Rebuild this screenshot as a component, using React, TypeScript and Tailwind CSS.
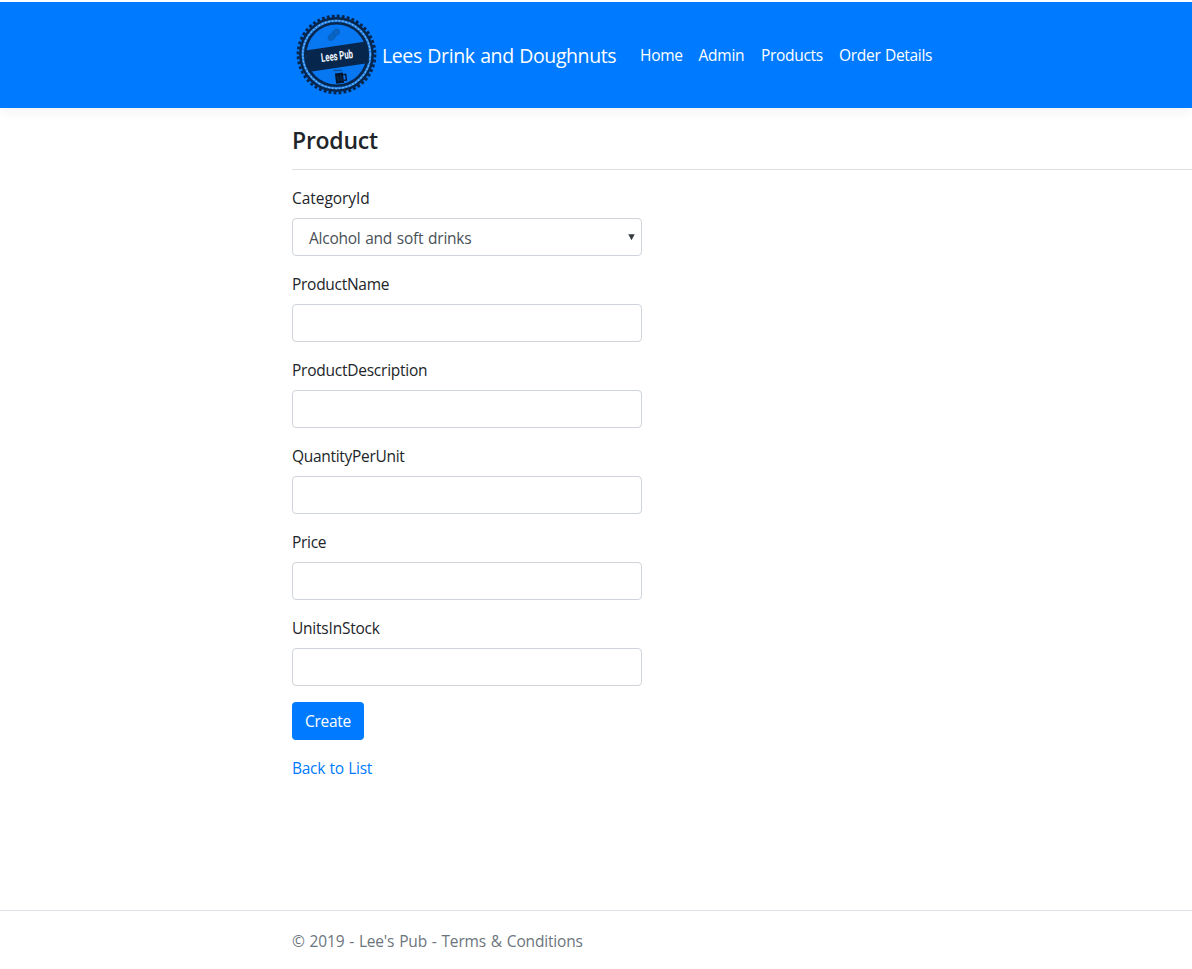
import React from 'react';

const navLinks = [
  { label: 'Home', style: 'w-[42.5px] tracking-[-0.3px]' },
  { label: 'Admin', style: 'w-[46.5px] tracking-[-0.25px]' },
  { label: 'Products', style: 'w-[62px] tracking-[-0.3px]' },
  { label: 'Order Details', style: 'w-[94px] tracking-[-0.3px] [word-spacing:0.8px]' },
];

const fields = [
  { name: 'ProductName', style: 'tracking-[-0.28px]' },
  { name: 'ProductDescription', style: 'tracking-[-0.24px]' },
  { name: 'QuantityPerUnit', style: 'tracking-[-0.3px]' },
  { name: 'Price', style: 'tracking-[-0.3px]' },
  { name: 'UnitsInStock', style: 'tracking-[-0.22px]' },
];

function Logo() {
  return (
    <svg width="90" height="90" viewBox="0 0 90 90" className="shrink-0" aria-label="Lees Pub">
      <circle cx="44.5" cy="44.5" r="37.5" fill="#06264d" />
      <circle cx="44.5" cy="44.5" r="38.4" fill="none" stroke="#06264d" strokeWidth="3" strokeDasharray="2.9 2.126" />
      <circle cx="44.5" cy="44.5" r="33.8" fill="none" stroke="#1f7de0" strokeWidth="2.4" />
      <circle cx="44.5" cy="44.5" r="33.8" fill="none" stroke="#6db4fa" strokeWidth="1.2" strokeDasharray="2 1.5" />
      <circle cx="44.5" cy="44.5" r="30" fill="#0878f2" />
      <g fill="#0a66c6" stroke="#0960bd" strokeWidth="2">
        <ellipse cx="44" cy="22.5" rx="3.4" ry="2.4" transform="rotate(-40 44 22.5)" />
        <ellipse cx="39.7" cy="27" rx="3.4" ry="2.4" transform="rotate(-40 39.7 27)" />
      </g>
      <path d="M13.5 40.5 74 31.5 77 53 16.5 62Z" fill="#06264d" />
      <text
        x="45"
        y="50"
        textAnchor="middle"
        textLength="32"
        lengthAdjust="spacingAndGlyphs"
        transform="rotate(-7 45 46)"
        fill="#f2f8ff"
        fontFamily="Roboto, sans-serif"
        fontWeight="700"
        fontSize="12"
      >
        Lees Pub
      </text>
      <g transform="rotate(-7 48 68)">
        <path d="M43.5 62.8h8v10.4h-8z" fill="#03152e" />
        <path d="M51.5 65h2.6v5.8h-2.6" fill="none" stroke="#03152e" strokeWidth="1.4" />
        <path d="M46 65.5v5.5M49 65.5v5.5" stroke="#0b3a70" strokeWidth="0.8" />
        <path d="M42.5 60.5q2-1.5 3.8 0 2-1.2 4.7.8" fill="none" stroke="#0b4f9c" strokeWidth="1.2" />
      </g>
    </svg>
  );
}

export default function App() {
  return (
    <div className="flex h-[969px] w-full flex-col overflow-hidden bg-white pt-[2px] font-['Open_Sans','Noto_Sans',sans-serif] text-[15.5px] leading-6 text-[#212529]">
      <header className="flex h-[106px] shrink-0 items-center bg-[#007bff] pl-[292px] text-white shadow-[0_4px_12px_rgba(0,0,0,0.05)]">
        <a href="#" className="flex items-center">
          <Logo />
          <span className="w-[258px] whitespace-nowrap pt-px text-[19.5px] tracking-[-0.4px] [word-spacing:0.9px]">Lees Drink and Doughnuts</span>
        </a>
        <nav className="flex gap-4 whitespace-nowrap">
          {navLinks.map((link) => (
            <a key={link.label} href="#" className={link.style}>{link.label}</a>
          ))}
        </nav>
      </header>

      <main className="ml-[292px] flex-1 pt-[18px]">
        <h4 className="text-[23px] font-semibold leading-[29px]"><span className="tracking-[-0.25px]">Product</span></h4>
        <hr className="mt-[14px] border-[#dfdfdf]" />
        <form className="mt-4 flex w-[350px] flex-col items-start gap-4" onSubmit={(e) => e.preventDefault()}>
          <div className="flex w-full flex-col items-start gap-2">
            <label className="tracking-[-0.05px]">CategoryId</label>
            <div className="flex h-[38px] w-full items-center justify-between rounded border border-[#ced4da] pl-4 pr-[6px] text-[#495057]">
              <span className="pt-0.5 tracking-[-0.25px] [word-spacing:1px]">Alcohol and soft drinks</span>
              <svg width="7" height="7" viewBox="0 0 7 7"><path d="M.3.2h6.4L3.5 6.3z" fill="#343a40" /></svg>
            </div>
          </div>
          {fields.map((field) => (
            <div key={field.name} className="flex w-full flex-col items-start gap-2">
              <label htmlFor={field.name} className={field.style}>{field.name}</label>
              <input id={field.name} className="h-[38px] w-full rounded border border-[#ced4da] px-3 outline-none" />
            </div>
          ))}
          <button className="h-[38px] w-[72px] rounded bg-[#007bff] text-white"><span className="tracking-[-0.3px]">Create</span></button>
          <a href="#" className="tracking-[-0.3px] text-[#007bff] [word-spacing:0.8px]">Back to List</a>
        </form>
      </main>

      <footer className="h-[59px] shrink-0 border-t border-[#dee2e6] pl-[292px] pt-[18px] text-[#6c757d]">
        <span className="tracking-[-0.17px] [word-spacing:1px]">© 2019 - Lee's Pub - Terms &amp; Conditions</span>
      </footer>
    </div>
  );
}
